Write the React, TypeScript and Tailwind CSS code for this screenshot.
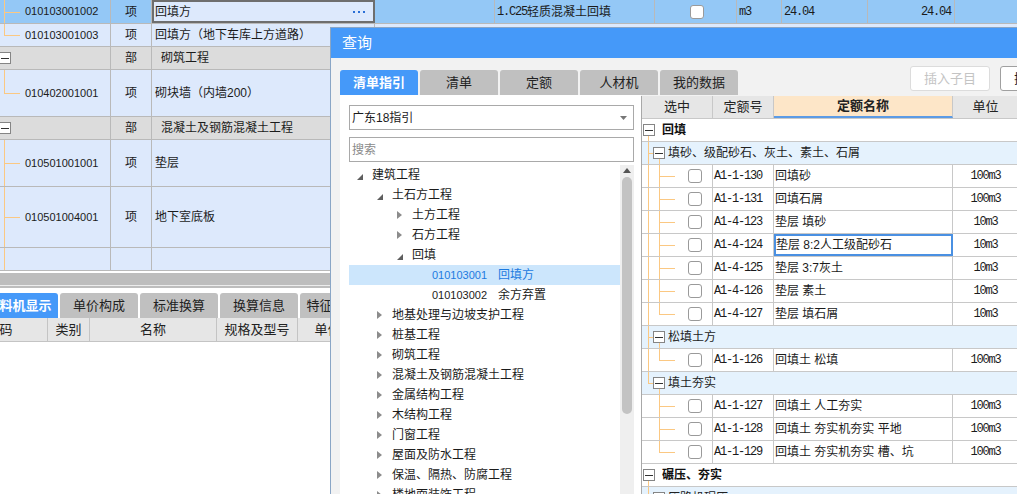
import React from "react"

const SANS = "font-['Liberation_Sans','Noto_Sans_CJK_SC',sans-serif]"
const MONO = "font-['Liberation_Mono','Noto_Sans_CJK_SC',monospace]"
const NUM = `text-[12px] tracking-[-1.2px] ${MONO}`

function MinusBox({ className }: { className: string }) {
  return (
    <span
      className={`absolute top-1/2 -translate-y-1/2 w-[12px] h-[12px] border border-[#858585] bg-white flex items-center justify-center ${className}`}
    >
      <span className="w-[8px] h-px bg-[#333]" />
    </span>
  )
}

function CheckBox() {
  return <span className="block w-[14px] h-[14px] rounded-[3px] border border-[#9a9a9a] bg-white shrink-0" />
}

const mainRows = [
  { h: "h-[23px]", kind: "item", code: "010103001003", name: "回填方（地下车库上方道路）", line: "half" },
  { h: "h-[23px]", kind: "part", code: "", name: "砌筑工程", line: "none" },
  { h: "h-[47px]", kind: "item", code: "010402001001", name: "砌块墙（内墙200）", line: "half" },
  { h: "h-[23px]", kind: "part", code: "", name: "混凝土及钢筋混凝土工程", line: "none" },
  { h: "h-[47px]", kind: "item", code: "010501001001", name: "垫层", line: "full" },
  { h: "h-[61px]", kind: "item", code: "010501004001", name: "地下室底板", line: "full" },
  { h: "h-[23px]", kind: "item", code: "", name: "", line: "full" },
]

function MainWindow() {
  return (
    <div className="flex flex-col text-[12px]">
      {/* selected row */}
      <div className="flex h-[24px] bg-[#94c8f6] border-b border-[#b9b9b9]">
        <div className="relative w-[111px] shrink-0 border-r border-[#b9b9b9] flex items-center pl-[25px] text-[11px]">
          <span className="absolute left-[4px] top-0 h-full w-px bg-[#fbc882]" />
          <span className="absolute left-[4px] top-1/2 w-[16px] h-px bg-[#fbc882]" />
          010103001002
        </div>
        <div className="w-[41px] shrink-0 border-r border-[#b9b9b9] flex items-center justify-center">项</div>
        <div className="w-[223px] shrink-0 border-2 border-[#6e6e6e] bg-[#dde9fc] flex items-center justify-between pl-[1px] pr-[8px]">
          <span>回填方</span>
          <span className="flex gap-[3px]">
            <span className="w-[2px] h-[2px] bg-[#2a6fd6]" />
            <span className="w-[2px] h-[2px] bg-[#2a6fd6]" />
            <span className="w-[2px] h-[2px] bg-[#2a6fd6]" />
          </span>
        </div>
        <div className="w-[120px] shrink-0 border-r border-[#b9b9b9]" />
        <div className="w-[160px] shrink-0 border-r border-[#b9b9b9] flex items-center pl-[2px]">
          <span className={NUM}>1.C25</span>
          <span>轻质混凝土回填</span>
        </div>
        <div className="w-[82px] shrink-0 border-r border-[#b9b9b9] flex items-center pl-[35px]">
          <CheckBox />
        </div>
        <div className={`w-[45px] shrink-0 border-r border-[#b9b9b9] flex items-center pl-[2px] ${NUM}`}>m3</div>
        <div className={`w-[86px] shrink-0 border-r border-[#b9b9b9] flex items-center pl-[2px] ${NUM}`}>24.04</div>
        <div className={`w-[87px] shrink-0 border-r border-[#b9b9b9] flex items-center justify-end pr-[3px] ${NUM}`}>24.04</div>
        <div className="flex-1" />
      </div>

      {mainRows.map((r, i) => {
        const part = r.kind === "part"
        return (
          <div
            key={i}
            className={`flex ${r.h} border-b border-[#b9b9b9] ${part ? "bg-[#dcdcdc]" : "bg-[#dde9fc]"}`}
          >
            <div className="relative w-[111px] shrink-0 border-r border-[#b9b9b9] flex items-center pl-[25px] text-[11px]">
              {r.line === "full" && <span className="absolute left-[4px] top-0 h-full w-px bg-[#fbc882]" />}
              {r.line === "half" && <span className="absolute left-[4px] top-0 h-1/2 w-px bg-[#fbc882]" />}
              {r.code && <span className="absolute left-[4px] top-1/2 w-[16px] h-px bg-[#fbc882]" />}
              {part && <MinusBox className="left-[-1px]" />}
              {r.code}
            </div>
            <div className="w-[41px] shrink-0 border-r border-[#b9b9b9] flex items-center justify-center">
              {r.code ? "项" : part ? "部" : ""}
            </div>
            <div className={`w-[223px] shrink-0 border-r border-[#b9b9b9] flex items-center whitespace-nowrap ${part ? "pl-[9px]" : "pl-[3px]"}`}>
              {r.name}
            </div>
            <div className="flex-1" />
          </div>
        )
      })}

      {/* horizontal scroll bar */}
      <div className="h-[2px] bg-white" />
      <div className="h-[12px] bg-[#bdbdbd]" />
      <div className="h-[1px] bg-[#ececec]" />
      <div className="h-[2px] bg-[#bdbdbd]" />
      <div className="h-[5px] bg-white" />

      {/* bottom tabs */}
      <div className="flex gap-[2px] ml-[-20px] h-[25px] text-[13px]">
        <div className="w-[78px] shrink-0 rounded-t-[3px] bg-[#4599f9] text-white font-bold flex items-center justify-center whitespace-nowrap">
          工料机显示
        </div>
        {["单价构成", "标准换算", "换算信息", "特征及内容"].map((t) => (
          <div key={t} className="w-[78px] shrink-0 rounded-t-[3px] bg-[#c0c0c0] text-[#222] flex items-center justify-center whitespace-nowrap">
            {t}
          </div>
        ))}
      </div>

      {/* bottom grid header */}
      <div className="flex ml-[-48px] h-[24px] bg-[#e6e6e6] border-b border-[#c4c4c4] text-[13px] text-[#222]">
        <div className="w-[96px] shrink-0 border-r border-[#c4c4c4] flex items-center justify-center">编码</div>
        <div className="w-[42px] shrink-0 border-r border-[#c4c4c4] flex items-center justify-center">类别</div>
        <div className="w-[127px] shrink-0 border-r border-[#c4c4c4] flex items-center justify-center">名称</div>
        <div className="w-[81px] shrink-0 border-r border-[#c4c4c4] flex items-center justify-center">规格及型号</div>
        <div className="w-[60px] shrink-0 border-r border-[#c4c4c4] flex items-center justify-center">单位</div>
      </div>
    </div>
  )
}

type TreeItem = { lvl: number; icon?: "open" | "closed"; code?: string; text: string; sel?: boolean }

const tree: TreeItem[] = [
  { lvl: 0, icon: "open", text: "建筑工程" },
  { lvl: 1, icon: "open", text: "土石方工程" },
  { lvl: 2, icon: "closed", text: "土方工程" },
  { lvl: 2, icon: "closed", text: "石方工程" },
  { lvl: 2, icon: "open", text: "回填" },
  { lvl: 3, code: "010103001", text: "回填方", sel: true },
  { lvl: 3, code: "010103002", text: "余方弃置" },
  { lvl: 1, icon: "closed", text: "地基处理与边坡支护工程" },
  { lvl: 1, icon: "closed", text: "桩基工程" },
  { lvl: 1, icon: "closed", text: "砌筑工程" },
  { lvl: 1, icon: "closed", text: "混凝土及钢筋混凝土工程" },
  { lvl: 1, icon: "closed", text: "金属结构工程" },
  { lvl: 1, icon: "closed", text: "木结构工程" },
  { lvl: 1, icon: "closed", text: "门窗工程" },
  { lvl: 1, icon: "closed", text: "屋面及防水工程" },
  { lvl: 1, icon: "closed", text: "保温、隔热、防腐工程" },
  { lvl: 1, icon: "closed", text: "楼地面装饰工程" },
]

const indent = ["pl-[8px]", "pl-[28px]", "pl-[48px]", "pl-[68px]"]

function TreeIcon({ kind }: { kind?: "open" | "closed" }) {
  if (kind === "open")
    return (
      <svg width="6" height="6" viewBox="0 0 6 6" className="mt-[3px]">
        <polygon points="6,0 6,6 0,6" fill="#5e5e5e" />
      </svg>
    )
  if (kind === "closed")
    return (
      <svg width="5" height="8" viewBox="0 0 5 8">
        <polygon points="0,0 5,4 0,8" fill="#8c8c8c" />
      </svg>
    )
  return null
}

type RRow =
  | { t: "top"; text: string }
  | { t: "group"; text: string; outer: "full" | "half" }
  | { t: "item"; code: string; name: string; unit: string; outer: boolean; last?: boolean; focus?: boolean }

const rrows: RRow[] = [
  { t: "top", text: "回填" },
  { t: "group", text: "填砂、级配砂石、灰土、素土、石屑", outer: "full" },
  { t: "item", code: "A1-1-130", name: "回填砂", unit: "100m3", outer: true },
  { t: "item", code: "A1-1-131", name: "回填石屑", unit: "100m3", outer: true },
  { t: "item", code: "A1-4-123", name: "垫层 填砂", unit: "10m3", outer: true },
  { t: "item", code: "A1-4-124", name: "垫层 8:2人工级配砂石", unit: "10m3", outer: true, focus: true },
  { t: "item", code: "A1-4-125", name: "垫层 3:7灰土", unit: "10m3", outer: true },
  { t: "item", code: "A1-4-126", name: "垫层 素土", unit: "10m3", outer: true },
  { t: "item", code: "A1-4-127", name: "垫层 填石屑", unit: "10m3", outer: true, last: true },
  { t: "group", text: "松填土方", outer: "full" },
  { t: "item", code: "A1-1-126", name: "回填土 松填", unit: "100m3", outer: true, last: true },
  { t: "group", text: "填土夯实", outer: "half" },
  { t: "item", code: "A1-1-127", name: "回填土 人工夯实", unit: "100m3", outer: false },
  { t: "item", code: "A1-1-128", name: "回填土 夯实机夯实 平地", unit: "100m3", outer: false },
  { t: "item", code: "A1-1-129", name: "回填土 夯实机夯实 槽、坑", unit: "100m3", outer: false, last: true },
  { t: "top", text: "碾压、夯实" },
  { t: "group", text: "压路机碾压", outer: "full" },
]

function RightTable() {
  return (
    <div className="w-[440px] shrink-0 border-l border-[#a8a8a8] bg-white mt-[1px] text-[12px]">
      <div className="flex h-[23px] bg-[#e6e6e6] border-b border-[#c8c8c8] text-[13px] text-[#222]">
        <div className="w-[71px] shrink-0 border-r border-[#c8c8c8] flex items-center justify-center">选中</div>
        <div className="w-[61px] shrink-0 border-r border-[#c8c8c8] flex items-center justify-center">定额号</div>
        <div className="w-[179px] shrink-0 border-r border-[#c8c8c8] border-b-2 border-b-[#5b9be6] bg-[#fde6c8] font-bold flex items-center justify-center">
          定额名称
        </div>
        <div className="w-[66px] shrink-0 border-r border-[#c8c8c8] flex items-center justify-center">单位</div>
        <div className="flex-1" />
      </div>
      {rrows.map((r, i) => {
        if (r.t === "top")
          return (
            <div key={i} className="relative h-[23px] border-b border-[#c8c8c8] flex items-center pl-[20px] font-bold text-[#111]">
              <span className="absolute left-[6px] top-1/2 h-1/2 w-px bg-[#fbc882]" />
              <MinusBox className="left-[1px]" />
              {r.text}
            </div>
          )
        if (r.t === "group")
          return (
            <div key={i} className="relative h-[23px] border-b border-[#c8c8c8] bg-[#e5f2fd] flex items-center pl-[26px] text-[#222]">
              {r.outer === "full" ? (
                <span className="absolute left-[6px] top-0 h-full w-px bg-[#fbc882]" />
              ) : (
                <span className="absolute left-[6px] top-0 h-1/2 w-px bg-[#fbc882]" />
              )}
              <span className="absolute left-[6px] top-1/2 w-[6px] h-px bg-[#fbc882]" />
              <span className="absolute left-[17px] top-1/2 h-1/2 w-px bg-[#fbc882]" />
              <MinusBox className="left-[11px]" />
              {r.text}
            </div>
          )
        return (
          <div key={i} className="flex h-[23px] border-b border-[#c8c8c8]">
            <div className="relative w-[71px] shrink-0 border-r border-[#c8c8c8] flex items-center pl-[46px]">
              {r.outer && <span className="absolute left-[6px] top-0 h-full w-px bg-[#fbc882]" />}
              {r.last ? (
                <span className="absolute left-[17px] top-0 h-1/2 w-px bg-[#fbc882]" />
              ) : (
                <span className="absolute left-[17px] top-0 h-full w-px bg-[#fbc882]" />
              )}
              <span className="absolute left-[17px] top-1/2 w-[16px] h-px bg-[#fbc882]" />
              <CheckBox />
            </div>
            <div className={`w-[61px] shrink-0 border-r border-[#c8c8c8] flex items-center pl-[1px] ${NUM}`}>
              {r.code}
            </div>
            <div
              className={`w-[179px] shrink-0 flex items-center whitespace-nowrap ${
                r.focus ? "border-2 border-[#4a90e2] pl-0" : "border-r border-[#c8c8c8] pl-[1px]"
              }`}
            >
              {r.name}
            </div>
            <div className={`w-[66px] shrink-0 border-r border-[#c8c8c8] flex items-center justify-center ${NUM}`}>
              {r.unit}
            </div>
            <div className="flex-1" />
          </div>
        )
      })}
    </div>
  )
}

function QueryDialog() {
  return (
    <div className="absolute left-[330px] top-[27px] w-[760px] h-[480px] border border-[#8aa6c6] bg-[#f2f2f2] flex flex-col">
      <div className="h-[30px] bg-[#4599f9] text-white text-[15px] flex items-center pl-[11px]">查询</div>

      <div className="flex items-start pl-[9px] pt-[8px]">
        <div className="flex gap-[2px] mt-[4px] h-[25px] text-[13px] shrink-0">
          <div className="w-[78px] rounded-t-[3px] bg-[#4599f9] text-white font-bold flex items-center justify-center">清单指引</div>
          {["清单", "定额", "人材机", "我的数据"].map((t) => (
            <div key={t} className="w-[78px] rounded-t-[3px] bg-[#c0c0c0] text-[#222] flex items-center justify-center">
              {t}
            </div>
          ))}
        </div>
        <div className="flex gap-[10px] ml-[172px] text-[13px] shrink-0">
          <div className="w-[80px] h-[25px] rounded-[3px] border border-[#dcdcdc] bg-white text-[#c4c4c4] flex items-center justify-center">
            插入子目
          </div>
          <div className="w-[80px] h-[25px] rounded-[3px] border border-[#a0a0a0] bg-white text-[#222] flex items-center justify-center">
            插入清单
          </div>
        </div>
      </div>

      <div className="flex flex-1 min-h-0 pl-[9px]">
        <div className="w-[301px] shrink-0 bg-white pl-[9px] pt-[10px] flex flex-col text-[12px]">
          <div className="w-[285px] h-[25px] border border-[#a9a9a9] flex items-center justify-between pl-[2px] pr-[6px]">
            <span>广东18指引</span>
            <svg width="7" height="4" viewBox="0 0 7 4">
              <polygon points="0,0 7,0 3.5,4" fill="#777" />
            </svg>
          </div>
          <div className="w-[285px] h-[25px] mt-[7px] border border-[#a9a9a9] flex items-center pl-[2px] text-[#8a8a8a]">
            搜索
          </div>
          <div className="flex mt-[3px] flex-1 min-h-0">
            <div className="w-[271px]">
              {tree.map((n, i) => (
                <div
                  key={i}
                  className={`h-[20px] flex items-center whitespace-nowrap ${indent[n.lvl]} ${
                    n.sel ? "bg-[#cce6fc] text-[#1c7ae0]" : "text-[#1b1b1b]"
                  }`}
                >
                  <span className="w-[15px] flex items-center">
                    <TreeIcon kind={n.icon} />
                  </span>
                  {n.code && <span className="text-[11px] w-[66px]">{n.code}</span>}
                  <span>{n.text}</span>
                </div>
              ))}
            </div>
            <div className="w-[14px] bg-[#efefef] flex flex-col items-center">
              <svg width="8" height="5" viewBox="0 0 8 5" className="mt-[3px]">
                <polygon points="4,0 8,5 0,5" fill="#555" />
              </svg>
              <div className="w-[10px] h-[237px] mt-[4px] rounded-full bg-[#c3c3c3]" />
            </div>
          </div>
        </div>
        <RightTable />
      </div>
    </div>
  )
}

export default function App() {
  return (
    <div className={`relative w-[1017px] h-[494px] overflow-hidden bg-white text-[#1b1b1b] ${SANS}`}>
      <MainWindow />
      <QueryDialog />
    </div>
  )
}
